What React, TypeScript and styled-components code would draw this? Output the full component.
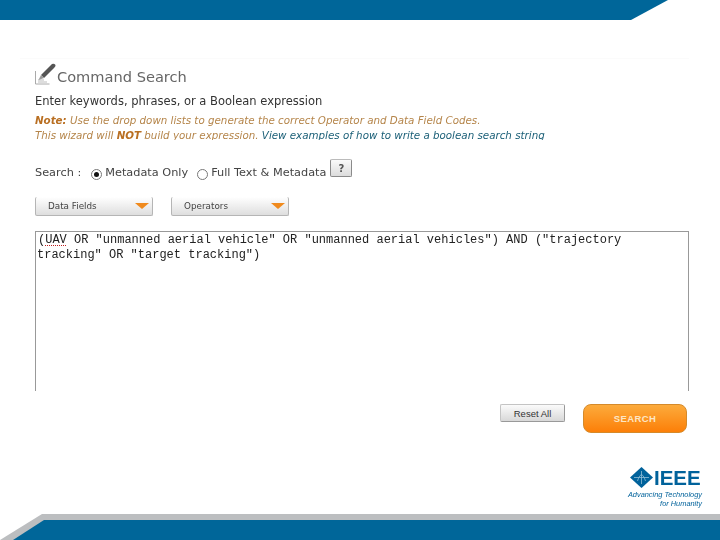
import React from 'react';
import styled, { createGlobalStyle } from 'styled-components';

const GlobalStyle = createGlobalStyle`
  html, body {
    margin: 0;
    padding: 0;
    background: #fff;
  }
`;

const Page = styled.div`
  width: 720px;
  height: 540px;
  display: flex;
  flex-direction: column;
  overflow: hidden;
  background: #fff;
  font-family: "DejaVu Sans", Verdana, sans-serif;
`;

const TopBar = styled.div`
  height: 20px;
  flex: none;
  background: #006699;
  clip-path: polygon(0 0, 668px 0, 631px 100%, 0 100%);
`;

const Panel = styled.main`
  flex: none;
  height: 333px;
  margin: 38px 31px 0 20px;
  padding: 0 0 0 15px;
  border-top: 1px solid #fbfbfb;
  display: flex;
  flex-direction: column;
  box-sizing: border-box;
  filter: blur(0.35px);
`;

const TitleRow = styled.div`
  display: flex;
  align-items: center;
  height: 22px;
  margin-top: 4px;
`;

const Title = styled.h1`
  margin: 6px 0 0 1px;
  font-size: 14.6px;
  font-weight: 400;
  line-height: 18px;
  color: #666;
`;

const Intro = styled.p`
  margin: 8px 0 0;
  font-size: 11.5px;
  line-height: 16px;
  color: #333;
`;

const NoteBox = styled.div`
  height: 27px;
  margin-top: 4px;
  overflow: hidden;
  font-size: 10.3px;
  font-style: italic;
  line-height: 15px;
  color: #b5854a;
`;

const NoteLabel = styled.b`
  color: #b96f22;
`;

const NoteLink = styled.a`
  color: #1c6078;
  text-decoration: none;
`;

const SearchRow = styled.div`
  display: flex;
  align-items: flex-end;
  height: 22px;
  margin-top: 19px;
  margin-bottom: -1px;
  font-size: 11.3px;
  line-height: 16px;
  color: #444;
`;

const Label = styled.span`
  margin-right: 10px;
`;

const RadioItem = styled.label`
  display: flex;
  align-items: center;
  margin-right: 9px;
`;

const Radio = styled.span<{ checked?: boolean }>`
  width: 9px;
  height: 9px;
  margin: 3px 3px 0 0;
  border: 1px solid #777;
  border-radius: 50%;
  display: flex;
  align-items: center;
  justify-content: center;

  &::after {
    content: '';
    width: 5px;
    height: 5px;
    border-radius: 50%;
    background: ${props => (props.checked ? '#111' : 'transparent')};
  }
`;

const HelpButton = styled.button`
  width: 22px;
  height: 18px;
  margin: 0 0 4px -5px;
  padding: 0;
  border: 1px solid #8a8a8a;
  border-top-color: #bbb;
  border-radius: 2px;
  background: linear-gradient(#fafafa, #dcdcdc);
  font-family: "DejaVu Sans", sans-serif;
  font-size: 10px;
  font-weight: 700;
  color: #555;
`;

const DropRow = styled.div`
  display: flex;
  gap: 18px;
  margin-top: 17px;
`;

const Dropdown = styled.div`
  width: 118px;
  height: 19px;
  box-sizing: border-box;
  padding: 0 2px 0 12px;
  display: flex;
  align-items: center;
  justify-content: space-between;
  border: 1px solid #b5b5b5;
  border-top: none;
  border-radius: 2px;
  background: linear-gradient(#fff, #dedede);
  font-size: 8.8px;
  color: #444;
`;

const Arrow = styled.span`
  width: 0;
  height: 0;
  margin-right: 1px;
  border-left: 7px solid transparent;
  border-right: 7px solid transparent;
  border-top: 6px solid #f08a1d;
`;

const Editor = styled.div`
  flex: 1;
  margin-top: 15px;
  box-sizing: border-box;
  padding: 1px 1px 0 2px;
  border: 1px solid #999;
  border-bottom: none;
  font-family: "Liberation Mono", "Courier New", monospace;
  font-size: 12px;
  line-height: 14.5px;
  color: #222;
  white-space: pre;
`;

const Squiggle = styled.span`
  text-decoration: underline dotted #c02020;
  text-underline-offset: 2px;
`;

const EditorLine = styled.div<{ outdent?: boolean }>`
  margin-left: ${props => (props.outdent ? '-1px' : '0')};
`;

const Actions = styled.div`
  flex: none;
  display: flex;
  align-items: flex-start;
  justify-content: flex-end;
  gap: 18px;
  height: 59px;
  margin-top: 13px;
  padding-right: 33px;
`;

const ResetButton = styled.button`
  width: 65px;
  height: 18px;
  padding: 0;
  border: 1px solid #c4c4c4;
  border-bottom-color: #999;
  border-right-color: #999;
  border-radius: 2px;
  background: linear-gradient(#fbfbfb, #d8d8d8);
  font-family: "Liberation Sans", Arial, sans-serif;
  font-size: 9.5px;
  color: #333;
`;

const SearchButton = styled.button`
  width: 104px;
  height: 29px;
  padding: 0;
  border: 1px solid #d58a2a;
  border-radius: 8px;
  background: linear-gradient(#fcab3c, #fc7f08);
  font-family: "Liberation Sans", Arial, sans-serif;
  font-size: 9.5px;
  font-weight: 700;
  letter-spacing: 0.4px;
  color: #fde6c4;
`;

const LogoRow = styled.div`
  flex: none;
  height: 47px;
  margin-top: 4px;
  display: flex;
  justify-content: flex-end;
  padding-right: 18px;
`;

const Logo = styled.div`
  width: 72px;
  display: flex;
  flex-direction: column;
  align-items: flex-end;
  filter: blur(0.3px);
`;

const LogoTop = styled.div`
  display: flex;
  align-items: center;
  align-self: stretch;
  height: 21px;
  margin-bottom: 2px;
`;

const LogoWord = styled.span`
  margin-left: 1px;
  font-family: "Liberation Sans", Arial, sans-serif;
  font-size: 20.5px;
  font-weight: 700;
  line-height: 21px;
  color: #00629b;
`;

const Tagline = styled.span`
  font-family: "Liberation Sans", Arial, sans-serif;
  font-size: 7.4px;
  font-style: italic;
  line-height: 9px;
  white-space: nowrap;
  color: #00629b;
`;

const BottomBar = styled.div`
  flex: none;
  height: 26px;
  margin-top: auto;
  background: #bcbec0;
  clip-path: polygon(42px 0, 100% 0, 100% 100%, 0 100%);
  display: flex;
  align-items: flex-end;
`;

const BottomFill = styled.div`
  width: 100%;
  height: 20px;
  background: #006699;
  clip-path: polygon(44px 0, 100% 0, 100% 100%, 13px 100%);
`;

const PencilIcon = () => (
  <svg width="21" height="22" viewBox="0 0 21 22" fill="none">
    <path d="M0.5 8v13h14" stroke="#aaa" strokeWidth="1" />
    <path d="M3 17h6M3 19h9" stroke="#bbb" strokeWidth="1" />
    <path d="M6 12 L17 1 Q19 0 20.5 2 Q21 3 19 5 L9 15 Z" fill="#555" />
    <path d="M3.5 17 L6 12 L9 15 Z" fill="#999" />
  </svg>
);

const IeeeMark = () => (
  <svg width="23" height="21" viewBox="0 0 23 21">
    <path d="M11.5 0 L23 10.5 L11.5 21 L0 10.5 Z" fill="#00629b" />
    <path d="M4 10.5 H19 M11.5 4 V17 M7.5 14 C8.5 11 9.5 8.5 11.5 7.5 C13.5 8.5 14.5 11 15.5 14" stroke="#8fbdd6" strokeWidth="0.8" fill="none" />
  </svg>
);

const App: React.FC = () => {
  return (
    <Page>
      <GlobalStyle />
      <TopBar />
      <Panel>
        <TitleRow>
          <PencilIcon />
          <Title>Command Search</Title>
        </TitleRow>
        <Intro>Enter keywords, phrases, or a Boolean expression</Intro>
        <NoteBox>
          <NoteLabel>Note:</NoteLabel> Use the drop down lists to generate the correct Operator and Data Field Codes.
          <br />
          This wizard will <NoteLabel>NOT</NoteLabel> build your expression.{' '}
          <NoteLink href="#">View examples of how to write a boolean search string</NoteLink>
        </NoteBox>
        <SearchRow>
          <Label>Search :</Label>
          <RadioItem>
            <Radio checked />
            Metadata Only
          </RadioItem>
          <RadioItem>
            <Radio />
            Full Text &amp; Metadata
          </RadioItem>
          <HelpButton>?</HelpButton>
        </SearchRow>
        <DropRow>
          <Dropdown>
            Data Fields
            <Arrow />
          </Dropdown>
          <Dropdown>
            Operators
            <Arrow />
          </Dropdown>
        </DropRow>
        <Editor>
          <EditorLine>
            (<Squiggle>UAV</Squiggle> OR "unmanned aerial vehicle" OR "unmanned aerial vehicles") AND ("trajectory
          </EditorLine>
          <EditorLine outdent>tracking" OR "target tracking")</EditorLine>
        </Editor>
      </Panel>
      <Actions>
        <ResetButton>Reset All</ResetButton>
        <SearchButton>SEARCH</SearchButton>
      </Actions>
      <LogoRow>
        <Logo>
          <LogoTop>
            <IeeeMark />
            <LogoWord>IEEE</LogoWord>
          </LogoTop>
          <Tagline>Advancing Technology</Tagline>
          <Tagline>for Humanity</Tagline>
        </Logo>
      </LogoRow>
      <BottomBar>
        <BottomFill />
      </BottomBar>
    </Page>
  );
};

export default App;
